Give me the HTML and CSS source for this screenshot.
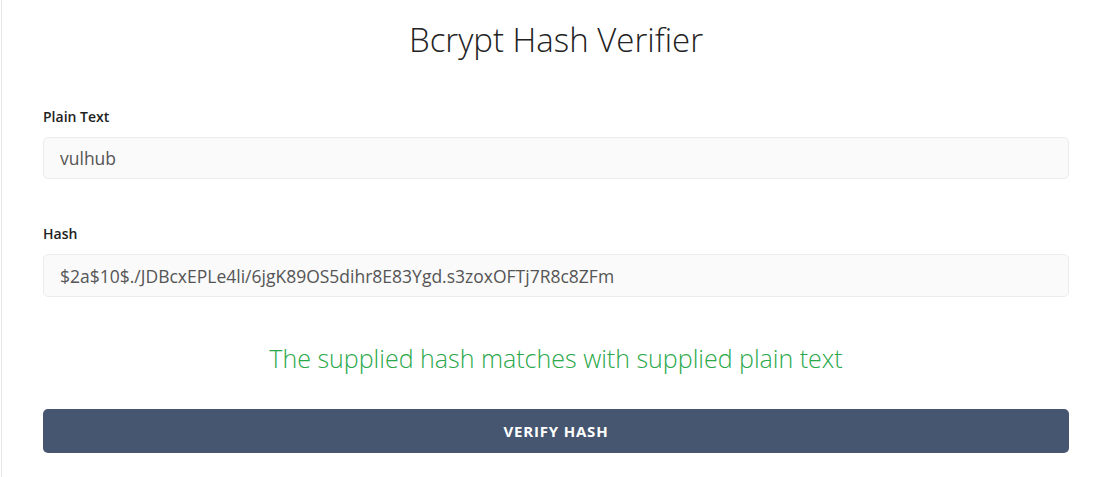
FILE: index.html
```html
<!DOCTYPE html>
<html lang="en">
<head>
<meta charset="utf-8">
<title>Bcrypt Hash Verifier</title>
<link rel="stylesheet" href="styles.css">
</head>
<body>
<div class="panel">
  <h1 class="title">Bcrypt Hash Verifier</h1>
  <form class="form">
    <div class="field">
      <label class="label" for="plain">Plain Text</label>
      <input class="input" id="plain" type="text" value="vulhub">
    </div>
    <div class="field">
      <label class="label" for="hash">Hash</label>
      <input class="input" id="hash" type="text" value="$2a$10$./JDBcxEPLe4li/6jgK89OS5dihr8E83Ygd.s3zoxOFTj7R8c8ZFm">
    </div>
    <p class="result">The supplied hash matches with supplied plain text</p>
    <button class="btn" type="button">VERIFY HASH</button>
  </form>
</div>
</body>
</html>
```
FILE: styles.css
```css
html, body {
  margin: 0;
  padding: 0;
  background: #fff;
}
body {
  font-family: "Open Sans", "Noto Sans", sans-serif;
  color: #333;
}
.panel {
  margin-left: 1px;
  border-left: 1px solid #e6e6e6;
  padding: 20px 41px 24px 41px;
  min-height: 477px;
  box-sizing: border-box;
}
.title {
  margin: 0;
  font-size: 33px;
  line-height: 40px;
  font-weight: 300;
  text-align: center;
  color: #222;
}
.form {
  display: flex;
  flex-direction: column;
  margin-top: 47px;
}
.field {
  display: flex;
  flex-direction: column;
  gap: 10px;
  margin-bottom: 45px;
}
.field + .field {
  margin-bottom: 44px;
}
.label {
  font-size: 14px;
  line-height: 20px;
  font-weight: 600;
  color: #222;
}
.input {
  box-sizing: border-box;
  height: 42px;
  width: 100%;
  padding: 0 16px;
  border: 1px solid #ececec;
  border-radius: 5px;
  background: #fafafa;
  font-family: "Open Sans", "Noto Sans", sans-serif;
  font-size: 17.5px;
  color: #555;
  outline: none;
}
.field + .field .input {
  height: 43px;
}
.result {
  margin: 0 0 34px;
  font-size: 25px;
  line-height: 34px;
  font-weight: 300;
  text-align: center;
  color: #2aa84a;
}
.btn {
  height: 44px;
  border: none;
  border-radius: 5px;
  background: #465671;
  color: #fff;
  font-family: "Open Sans", "Noto Sans", sans-serif;
  font-size: 15px;
  font-weight: 700;
  letter-spacing: 0.8px;
  cursor: pointer;
}
```
